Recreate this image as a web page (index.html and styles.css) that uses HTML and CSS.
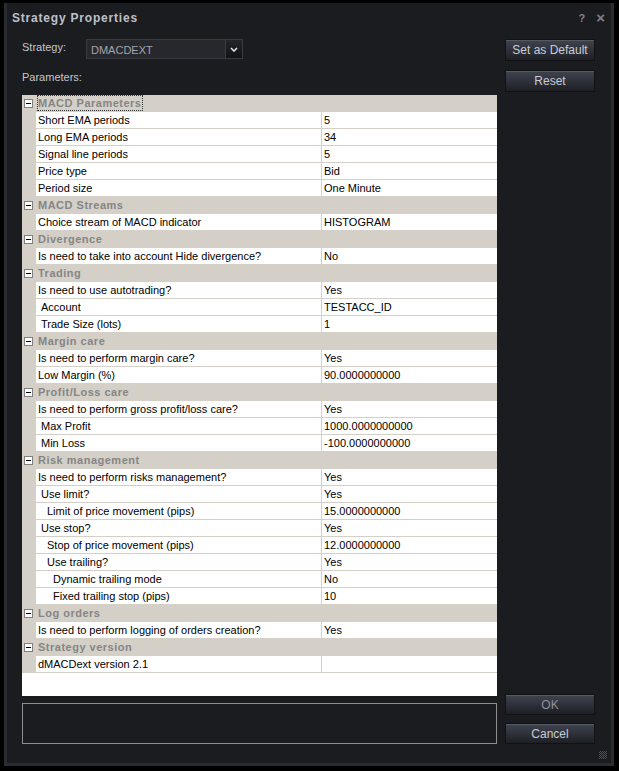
FILE: index.html
```html
<!DOCTYPE html>
<html lang="en">
<head>
<meta charset="UTF-8">
<meta name="viewport" content="width=device-width, initial-scale=1.0">
<title>Strategy Properties</title>
<link rel="stylesheet" href="styles.css">
</head>
<body>

<div class="window">
  <div class="frame">
    <div class="titlebar">
      <span class="title">Strategy Properties</span>
      <span class="tb-buttons">
        <span class="tb-help">?</span>
        <span class="tb-close">&#215;</span>
      </span>
    </div>

    <div class="content">
      <div class="main">
        <div class="strategy-row">
          <label class="lbl" for="strategy">Strategy:</label>
          <div class="combo" id="strategy">
            <span class="combo-text">DMACDEXT</span>
            <span class="combo-btn">
              <svg width="8" height="5" viewBox="0 0 8 5"><path d="M1 1 L4 4 L7 1" fill="none" stroke="#e0e2e8" stroke-width="1.6"/></svg>
            </span>
          </div>
        </div>

        <div class="lbl params-label">Parameters:</div>

        <div class="grid">
          <div class="row cat"><span class="gut"><i class="tog"></i></span><span class="name"><span class="focus">MACD Parameters</span></span><span class="val"></span></div>
          <div class="row"><span class="gut"></span><span class="name">Short EMA periods</span><span class="val">5</span></div>
          <div class="row"><span class="gut"></span><span class="name">Long EMA periods</span><span class="val">34</span></div>
          <div class="row"><span class="gut"></span><span class="name">Signal line periods</span><span class="val">5</span></div>
          <div class="row"><span class="gut"></span><span class="name">Price type</span><span class="val">Bid</span></div>
          <div class="row"><span class="gut"></span><span class="name">Period size</span><span class="val">One Minute</span></div>

          <div class="row cat"><span class="gut"><i class="tog"></i></span><span class="name">MACD Streams</span><span class="val"></span></div>
          <div class="row"><span class="gut"></span><span class="name">Choice stream of MACD indicator</span><span class="val">HISTOGRAM</span></div>

          <div class="row cat"><span class="gut"><i class="tog"></i></span><span class="name">Divergence</span><span class="val"></span></div>
          <div class="row"><span class="gut"></span><span class="name">Is need to take into account Hide divergence?</span><span class="val">No</span></div>

          <div class="row cat"><span class="gut"><i class="tog"></i></span><span class="name">Trading</span><span class="val"></span></div>
          <div class="row"><span class="gut"></span><span class="name">Is need to use autotrading?</span><span class="val">Yes</span></div>
          <div class="row"><span class="gut"></span><span class="name ind1">Account</span><span class="val">TESTACC_ID</span></div>
          <div class="row"><span class="gut"></span><span class="name ind1">Trade Size (lots)</span><span class="val">1</span></div>

          <div class="row cat"><span class="gut"><i class="tog"></i></span><span class="name">Margin care</span><span class="val"></span></div>
          <div class="row"><span class="gut"></span><span class="name">Is need to perform margin care?</span><span class="val">Yes</span></div>
          <div class="row"><span class="gut"></span><span class="name">Low Margin (%)</span><span class="val">90.0000000000</span></div>

          <div class="row cat"><span class="gut"><i class="tog"></i></span><span class="name">Profit/Loss care</span><span class="val"></span></div>
          <div class="row"><span class="gut"></span><span class="name">Is need to perform gross profit/loss care?</span><span class="val">Yes</span></div>
          <div class="row"><span class="gut"></span><span class="name ind1">Max Profit</span><span class="val">1000.0000000000</span></div>
          <div class="row"><span class="gut"></span><span class="name ind1">Min Loss</span><span class="val">-100.0000000000</span></div>

          <div class="row cat"><span class="gut"><i class="tog"></i></span><span class="name">Risk management</span><span class="val"></span></div>
          <div class="row"><span class="gut"></span><span class="name">Is need to perform risks management?</span><span class="val">Yes</span></div>
          <div class="row"><span class="gut"></span><span class="name ind1">Use limit?</span><span class="val">Yes</span></div>
          <div class="row"><span class="gut"></span><span class="name ind2">Limit of price movement (pips)</span><span class="val">15.0000000000</span></div>
          <div class="row"><span class="gut"></span><span class="name ind1">Use stop?</span><span class="val">Yes</span></div>
          <div class="row"><span class="gut"></span><span class="name ind2">Stop of price movement (pips)</span><span class="val">12.0000000000</span></div>
          <div class="row"><span class="gut"></span><span class="name ind2">Use trailing?</span><span class="val">Yes</span></div>
          <div class="row"><span class="gut"></span><span class="name ind3">Dynamic trailing mode</span><span class="val">No</span></div>
          <div class="row"><span class="gut"></span><span class="name ind3">Fixed trailing stop (pips)</span><span class="val">10</span></div>

          <div class="row cat"><span class="gut"><i class="tog"></i></span><span class="name">Log orders</span><span class="val"></span></div>
          <div class="row"><span class="gut"></span><span class="name">Is need to perform logging of orders creation?</span><span class="val">Yes</span></div>

          <div class="row cat"><span class="gut"><i class="tog"></i></span><span class="name">Strategy version</span><span class="val"></span></div>
          <div class="row"><span class="gut"></span><span class="name">dMACDext version 2.1</span><span class="val"></span></div>
        </div>

        <div class="desc"></div>
      </div>

      <div class="side">
        <button type="button" class="btn">Set as Default</button>
        <button type="button" class="btn">Reset</button>
        <button type="button" class="btn btn-ok">OK</button>
        <button type="button" class="btn btn-cancel">Cancel</button>
      </div>
    </div>

    <div class="grip"></div>
  </div>
</div>

</body>
</html>
```

FILE: styles.css
```css
body {
  margin: 0;
  background-color: #000;
  font-family: "Liberation Sans", Arial, sans-serif;
  font-size: 11px;
}

.window {
  width: 619px;
  height: 771px;
  box-sizing: border-box;
  padding: 3px 5px 5px 4px;
}

.frame {
  position: relative;
  height: 100%;
  box-sizing: border-box;
  border: 3px solid #2b2c31;
  border-top: none;
  background-color: #1b1c20;
  display: flex;
  flex-direction: column;
}

/* title bar */
.titlebar {
  height: 30px;
  display: flex;
  align-items: center;
  justify-content: space-between;
  padding: 0 6px 0 5px;
}

.title {
  font-weight: bold;
  font-size: 12px;
  letter-spacing: 0.8px;
  color: #bfc1ca;
}

.tb-buttons {
  display: flex;
  gap: 11px;
  align-items: center;
  color: #7e818b;
  font-weight: bold;
}

.tb-help {
  font-size: 11px;
}

.tb-close {
  font-size: 15px;
  line-height: 12px;
}

/* body of the dialog */
.content {
  flex: 1;
  display: flex;
  padding: 6px 16px 19px 15px;
}

.main {
  width: 475px;
  display: flex;
  flex-direction: column;
}

.lbl {
  color: #c4c6cc;
  font-size: 11px;
}

.strategy-row {
  display: flex;
  height: 20px;
  align-items: center;
}

.strategy-row .lbl {
  width: 64px;
  margin-bottom: 5px;
}

.combo {
  width: 157px;
  height: 20px;
  box-sizing: border-box;
  border: 1px solid #3a3b41;
  background-color: #27282d;
  display: flex;
  align-items: center;
  justify-content: space-between;
}

.combo-text {
  color: #a4a5aa;
  padding-left: 4px;
  font-size: 11px;
  margin-top: 1px;
}

.combo-btn {
  width: 17px;
  height: 18px;
  box-sizing: border-box;
  border-left: 1px solid #3a3b41;
  background: linear-gradient(#23252a, #111215);
  display: flex;
  align-items: center;
  justify-content: center;
}

.params-label {
  line-height: 14px;
  margin: 11px 0;
}

/* property grid */
.grid {
  height: 601px;
  background-color: #fff;
  color: #000;
  overflow: hidden;
}

.row {
  display: grid;
  grid-template-columns: 14px 285px 1fr;
  height: 17px;
}

.gut {
  background-color: #d4d0c8;
  display: flex;
  align-items: center;
  padding-left: 2px;
}

.name,
.val {
  line-height: 16px;
  border-bottom: 1px solid #d4d0c8;
  padding-left: 2px;
  white-space: nowrap;
  overflow: hidden;
}

.val {
  border-left: 1px solid #d4d0c8;
}

.ind1 { padding-left: 5px; }
.ind2 { padding-left: 11px; }
.ind3 { padding-left: 17px; }

.cat .name,
.cat .val {
  background-color: #d4d0c8;
  font-weight: bold;
  color: #858585;
  letter-spacing: 0.5px;
}

.tog {
  position: relative;
  width: 9px;
  height: 9px;
  box-sizing: border-box;
  border: 1px solid #808080;
  background-color: #fff;
}

.tog::after {
  content: "";
  position: absolute;
  left: 1px;
  top: 3px;
  width: 5px;
  height: 1px;
  background-color: #000;
}

.focus {
  display: inline-block;
  box-sizing: border-box;
  height: 16px;
  line-height: 14px;
  border: 1px dotted #333;
  margin-left: -1px;
  padding: 0 1px 0 0;
}

.desc {
  margin-top: 7px;
  height: 41px;
  box-sizing: border-box;
  border: 1px solid #8e8e8e;
}

/* buttons column */
.side {
  width: 90px;
  margin-left: 8px;
  display: flex;
  flex-direction: column;
}

.btn {
  height: 22px;
  margin: 0 0 9px;
  padding: 0;
  border: 1px solid #111216;
  box-shadow: inset 0 1px 0 #555963;
  background: linear-gradient(#40444f, #1d1f24);
  color: #c9cdd5;
  font-family: "Liberation Sans", Arial, sans-serif;
  font-size: 12px;
  cursor: pointer;
}

.btn-ok {
  margin-top: auto;
  height: 21px;
  margin-bottom: 8px;
  color: #8e929a;
}

.btn-cancel {
  height: 21px;
  margin-bottom: 0;
}

/* resize grip: 1px checker dots */
.grip {
  position: absolute;
  right: 4px;
  bottom: 4px;
  width: 8px;
  height: 8px;
  background: repeating-conic-gradient(#4e5058 0 25%, transparent 0 50%) 0 0 / 2px 2px;
}
```
